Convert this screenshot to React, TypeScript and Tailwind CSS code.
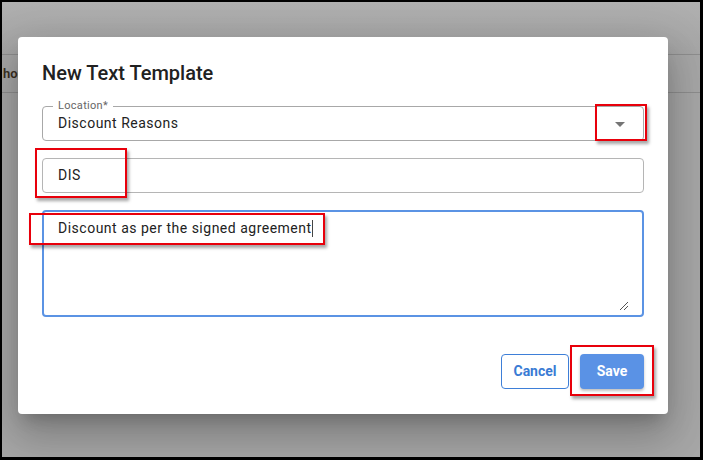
import React from 'react';

const RedMark = ({ className }: { className: string }) => (
  <div className={`absolute border-2 border-[#e8000b] shadow-[2px_3px_3px_rgba(0,0,0,0.35)] pointer-events-none ${className}`} />
);

export default function App() {
  return (
    <div className="w-[703px] h-[460px] border-2 border-r-[3px] border-b-[3px] border-black bg-[#a7a7a7] relative overflow-hidden font-['Roboto',sans-serif]">
      {/* page behind the backdrop */}
      <div className="h-[52px] bg-gradient-to-b from-[#b0b0b0] to-[#a6a6a6]" />
      <div className="h-[39px] border-y border-[#8e8e8e] flex items-center pl-[1px]">
        <span className="text-[13px] font-semibold text-[#3a2f20]">hors</span>
      </div>

      {/* dialog */}
      <div className="absolute left-[16px] top-[35px] w-[650px] h-[377px] bg-white rounded-[4px] shadow-[0_11px_15px_-7px_rgba(0,0,0,0.2),0_24px_38px_3px_rgba(0,0,0,0.14),0_9px_46px_8px_rgba(0,0,0,0.12)] px-[24px] pt-[24px] flex flex-col">
        <h2 className="h-[24px] leading-[24px] text-[20px] font-medium text-[#212121]">New Text Template</h2>

        {/* select */}
        <div className="relative mt-[21px] h-[35px] border border-[#a8a8a8] rounded-[4px] flex items-center pl-[15px] pr-[10px]">
          <span className="absolute left-[10px] top-[-8px] bg-white px-[5px] text-[11px] leading-[14px] tracking-[0.3px] text-[#666]">Location*</span>
          <span className="flex-1 text-[14px] tracking-[0.5px] text-[#222]">Discount Reasons</span>
          <svg viewBox="0 0 24 24" className="w-[24px] h-[24px] fill-[#757575] mr-[1px]">
            <path d="M7 10l5 5 5-5z" />
          </svg>
        </div>

        {/* code input */}
        <div className="mt-[17px] h-[35px] border border-[#b5b5b5] rounded-[4px] flex items-center pl-[15px] text-[14px] tracking-[0.5px] text-[#222]">
          DIS
        </div>

        {/* textarea */}
        <div className="relative mt-[17px] h-[107px] border-2 border-[#5b93e4] rounded-[4px] pl-[14px] pt-[7px] text-[14px] leading-[18px] tracking-[0.5px] text-[#222]">
          <span>Discount as per the signed agreement</span>
          <span className="inline-block w-px h-[17px] bg-[#444] align-middle -mt-[2px]" />
          <svg viewBox="0 0 10 10" className="absolute right-[13px] bottom-[4px] w-[10px] h-[10px] stroke-[#555]" strokeWidth="1">
            <path d="M9 1L1 9M9 5L5 9" />
          </svg>
        </div>

        {/* actions */}
        <div className="mt-[37px] flex justify-end gap-[11px]">
          <button className="w-[68px] h-[35px] border border-[#3e7fd8] rounded-[4px] text-[14px] font-bold text-[#3a7bd4]">Cancel</button>
          <button className="w-[64px] h-[35px] bg-[#5a92e5] rounded-[4px] text-[14px] font-bold text-white shadow-[0_2px_3px_rgba(0,0,0,0.25)]">Save</button>
        </div>

        <RedMark className="left-[577px] top-[67px] w-[52px] h-[37px]" />
        <RedMark className="left-[17px] top-[111px] w-[92px] h-[50px]" />
        <RedMark className="left-[11px] top-[176px] w-[296px] h-[32px]" />
        <RedMark className="left-[552px] top-[308px] w-[84px] h-[51px]" />
      </div>
    </div>
  );
}
